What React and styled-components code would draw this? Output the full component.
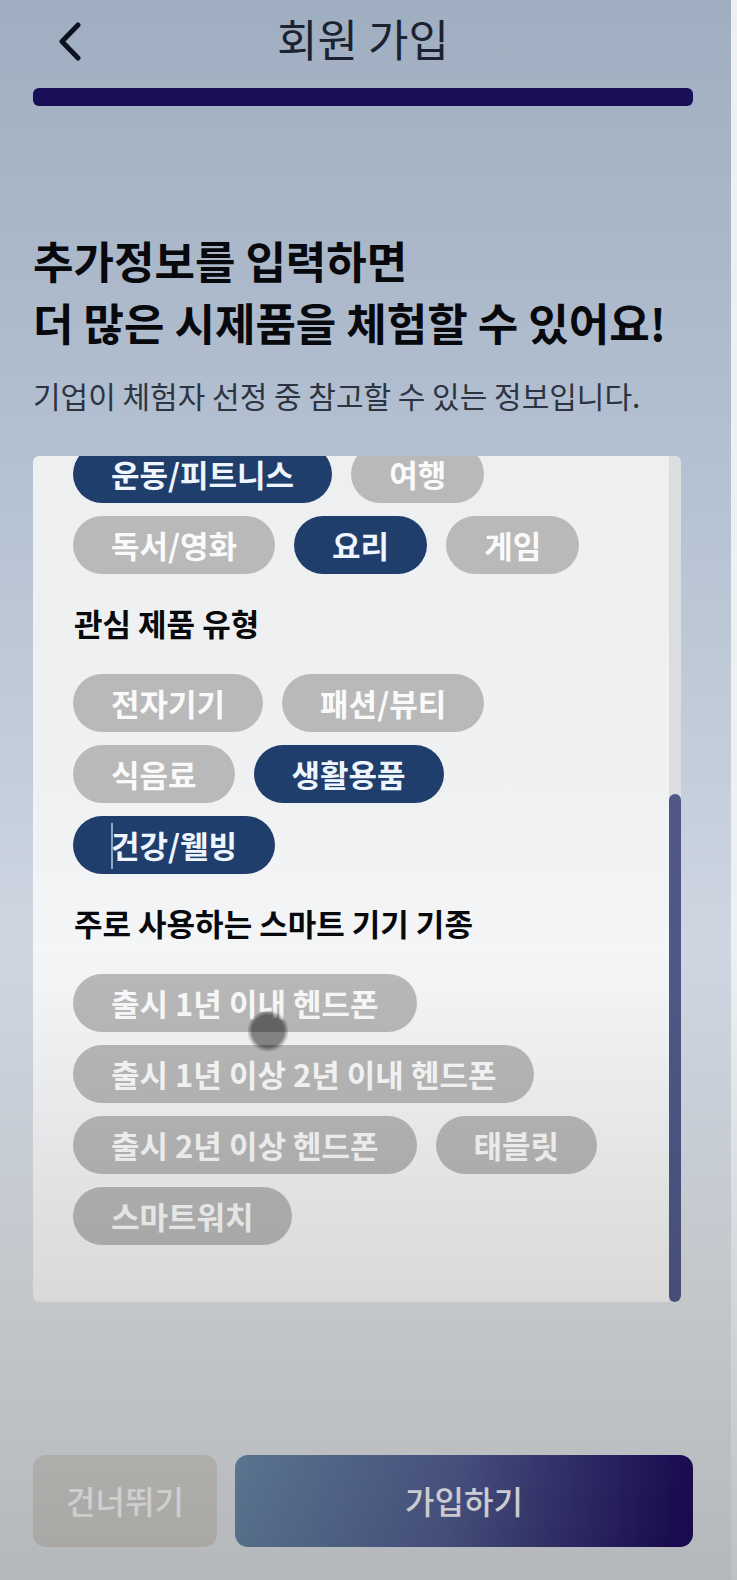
import React, { useState } from "react";
import styled, { createGlobalStyle } from "styled-components";

const GlobalStyle = createGlobalStyle`
  *, *::before, *::after { box-sizing: border-box; }
  body { margin: 0; }
  button { font: inherit; border: 0; cursor: pointer; }
  h1, h2, h3, p { margin: 0; }
`;

const Page = styled.div`
  position: relative;
  display: flex;
  flex-direction: column;
  min-height: 100vh;
  padding: 0 38px 33px 33px;
  border-right: 6px solid #edf1f4;
  background: linear-gradient(
    #a0aec1 0%,
    #a9b6c8 13%,
    #b2c0d1 28%,
    #c1cbd8 44%,
    #cdd6e1 60%,
    #d4dae3 72%,
    #dcdfe3 82%,
    #e2e6ea 100%
  );
  font-family: "Noto Sans CJK KR", "Noto Sans", sans-serif;
  color: #08090d;

  /* dimming veil that deepens toward the bottom of the screen */
  &::after {
    content: "";
    position: absolute;
    inset: 0 -6px 0 0;
    pointer-events: none;
    background: linear-gradient(
      transparent 60%,
      rgba(0, 0, 0, 0.11) 82%,
      rgba(0, 0, 0, 0.2) 100%
    );
  }
`;

const Header = styled.header`
  display: grid;
  grid-template-columns: 72px 1fr 72px;
  align-items: start;
  height: 88px;
  padding-top: 6px;
`;

const BackButton = styled.button`
  display: flex;
  align-items: center;
  justify-content: center;
  height: 72px;
  padding: 0;
  background: none;
  color: #0b1220;
`;

const Title = styled.h1`
  text-align: center;
  font-size: 44px;
  line-height: 64px;
  font-weight: 400;
  color: #1b2230;
`;

const Progress = styled.div`
  height: 18px;
  border-radius: 6px;
  background: #190e58;
`;

const Intro = styled.section`
  margin-top: 123px;
`;

const Headline = styled.h2`
  font-size: 44px;
  line-height: 62px;
  font-weight: 700;
`;

const Description = styled.p`
  margin-top: 20px;
  font-size: 30px;
  line-height: 44px;
  color: #2c3442;
`;

const Card = styled.main`
  display: flex;
  margin: 39px 12px 56px 0;
  border-radius: 6px;
  overflow: hidden;
  background: linear-gradient(#eeeff1, #f0f1f3 40%, #f5f6f8 62%, #f4f4f4);
`;

const Options = styled.div`
  flex: 1;
  margin-top: -11px;
  padding: 0 36px 57px 40px;
`;

const SectionTitle = styled.h3`
  padding: 27px 0 29px 1px;
  font-size: 31px;
  line-height: 44px;
  font-weight: 700;
`;

const ChipGroup = styled.div`
  display: flex;
  flex-wrap: wrap;
  gap: 13px 19px;
`;

const ChipButton = styled.button`
  position: relative;
  height: 58px;
  padding: 0 38px;
  border-radius: 29px;
  background: ${(p) => (p.$selected ? "#1f3e6c" : "#b9b9b9")};
  color: ${(p) => (p.$selected ? "#eef5fc" : "#fafafa")};
  font-size: 31px;
  line-height: 58px;
  font-weight: 700;
  white-space: nowrap;
`;

const Caret = styled.span`
  position: absolute;
  left: 38px;
  top: 7px;
  width: 2px;
  height: 46px;
  background: #8fa8c6;
`;

const TouchDot = styled.span`
  position: absolute;
  left: 174px;
  top: 36px;
  z-index: 1;
  width: 42px;
  height: 42px;
  border-radius: 50%;
  background: radial-gradient(
    circle closest-side,
    rgba(0, 0, 0, 0.46) 76%,
    transparent 100%
  );
`;

const ScrollTrack = styled.div`
  display: flex;
  align-items: flex-end;
  width: 12px;
  background: #dcdddf;
`;

const ScrollThumb = styled.div`
  width: 100%;
  height: 60%;
  border-radius: 6px;
  background: #4f5887;
`;

const Footer = styled.footer`
  display: flex;
  gap: 18px;
  margin-top: auto;
`;

const ActionButton = styled.button`
  height: 92px;
  padding: 0 0 2px;
  border-radius: 13px;
  font-size: 32px;
  line-height: 48px;
  font-weight: 500;
`;

const SkipButton = styled(ActionButton)`
  flex: 0 0 184px;
  background: #d0cfcc;
  color: #fafafa;
`;

const JoinButton = styled(ActionButton)`
  flex: 1;
  background: linear-gradient(98deg, #6b8aaa, #525e94 48%, #1f0e5f 96%);
  color: #f6f6fb;
`;

const groups = [
  {
    id: "hobby",
    label: "취미",
    hideTitle: true,
    chips: ["운동/피트니스", "여행", "독서/영화", "요리", "게임"],
  },
  {
    id: "product",
    label: "관심 제품 유형",
    chips: ["전자기기", "패션/뷰티", "식음료", "생활용품", "건강/웰빙"],
  },
  {
    id: "device",
    label: "주로 사용하는 스마트 기기 기종",
    chips: [
      "출시 1년 이내 헨드폰",
      "출시 1년 이상 2년 이내 헨드폰",
      "출시 2년 이상 헨드폰",
      "태블릿",
      "스마트워치",
    ],
  },
];

const CARET_CHIP = "건강/웰빙";
const TOUCHED_CHIP = "출시 1년 이내 헨드폰";

export default function App() {
  const [selected, setSelected] = useState([
    "운동/피트니스",
    "요리",
    "생활용품",
    "건강/웰빙",
  ]);

  const toggle = (name) =>
    setSelected((list) =>
      list.includes(name) ? list.filter((n) => n !== name) : [...list, name]
    );

  return (
    <>
      <GlobalStyle />
      <Page>
        <Header>
          <BackButton type="button" aria-label="뒤로">
            <svg width="26" height="40" viewBox="0 0 26 40" fill="none">
              <path
                d="M22 3L6 19.5L22 36"
                stroke="currentColor"
                strokeWidth="5"
                strokeLinecap="round"
                strokeLinejoin="round"
              />
            </svg>
          </BackButton>
          <Title>회원 가입</Title>
        </Header>
        <Progress role="progressbar" aria-label="가입 진행률" aria-valuenow={100} />

        <Intro>
          <Headline>
            추가정보를 입력하면
            <br />더 많은 시제품을 체험할 수 있어요!
          </Headline>
          <Description>
            기업이 체험자 선정 중 참고할 수 있는 정보입니다.
          </Description>
        </Intro>

        <Card>
          <Options>
            {groups.map((group) => (
              <section key={group.id}>
                {!group.hideTitle && <SectionTitle>{group.label}</SectionTitle>}
                <ChipGroup role="group" aria-label={group.label}>
                  {group.chips.map((name) => (
                    <ChipButton
                      key={name}
                      type="button"
                      $selected={selected.includes(name)}
                      aria-pressed={selected.includes(name)}
                      onClick={() => toggle(name)}
                    >
                      {name === CARET_CHIP && <Caret />}
                      {name}
                      {name === TOUCHED_CHIP && <TouchDot />}
                    </ChipButton>
                  ))}
                </ChipGroup>
              </section>
            ))}
          </Options>
          <ScrollTrack>
            <ScrollThumb />
          </ScrollTrack>
        </Card>

        <Footer>
          <SkipButton type="button">건너뛰기</SkipButton>
          <JoinButton type="button">가입하기</JoinButton>
        </Footer>
      </Page>
    </>
  );
}
